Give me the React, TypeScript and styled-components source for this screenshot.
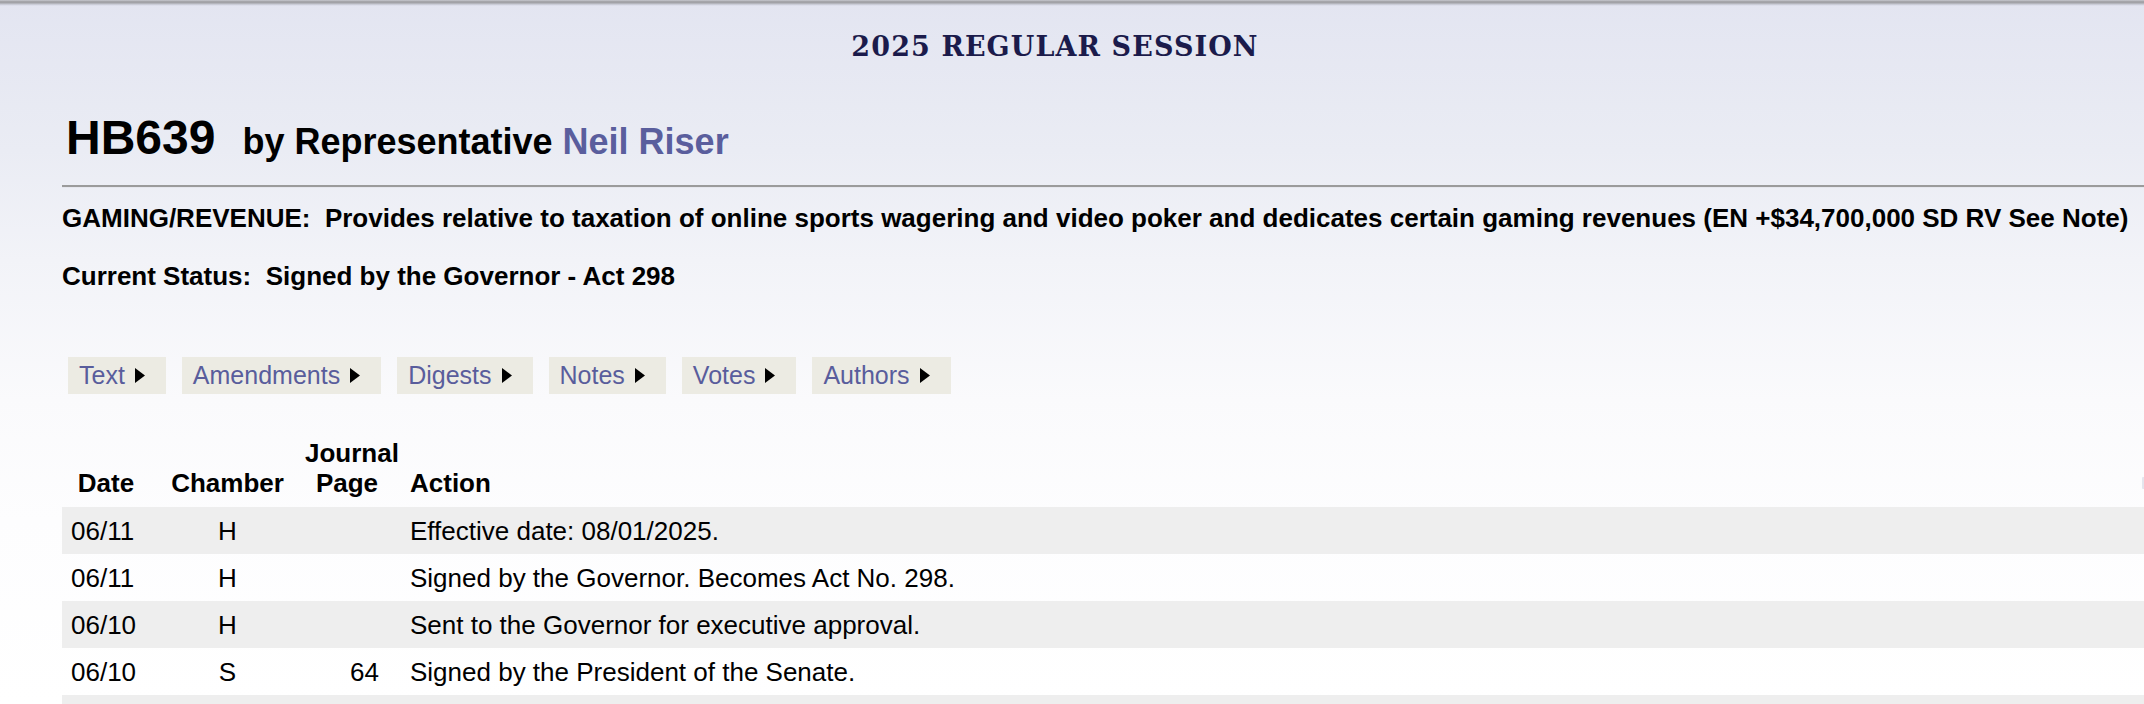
import React from 'react';
import styled, { createGlobalStyle } from 'styled-components';

const Global = createGlobalStyle`
  html, body { margin: 0; padding: 0; overflow: hidden; }
  body {
    width: 2144px;
    min-height: 704px;
    background: linear-gradient(to bottom, #e3e5f1 0px, #eaecf4 150px, #f2f3f8 260px, #fafafc 400px, #fdfdfe 520px, #ffffff 704px);
    font-family: "Liberation Sans", Arial, Helvetica, sans-serif;
    color: #000;
  }
`;

const Page = styled.div`
  position: relative;
  width: 2144px;
  height: 704px;
  overflow: hidden;
`;

const TopShadow = styled.div`
  height: 6px;
  background: linear-gradient(to bottom, #c8c9d0 0px, #9a9a9e 2px, #a9aab0 3px, rgba(205, 207, 220, 0.6) 5px, rgba(227, 229, 241, 0) 6px);
`;

const SessionTitle = styled.div`
  width: 2110px;
  margin-top: 26px;
  text-align: center;
  font-family: "DejaVu Serif", "Liberation Serif", Georgia, serif;
  font-weight: bold;
  font-size: 27px;
  line-height: 30px;
  letter-spacing: 1.1px;
  color: #1b1b4b;
`;

const Content = styled.div`
  padding-left: 62px;
`;

const Heading = styled.div`
  margin-top: 48px;
  padding-left: 4px;
  display: flex;
  align-items: baseline;
  line-height: 56px;
  font-weight: bold;
`;

const BillNo = styled.span`
  font-size: 48px;
`;

const Byline = styled.span`
  margin-left: 27px;
  font-size: 36px;
`;

const AuthorLink = styled.span`
  color: #5a5e9d;
`;

const Rule = styled.div`
  margin-top: 15px;
  width: 2200px;
  height: 2px;
  background: #9b9b9b;
  border-bottom: 1px solid #e6e7ee;
`;

const InfoLine = styled.div<{ $gap: number }>`
  margin-top: ${(p) => p.$gap}px;
  font-size: 26px;
  line-height: 30px;
  font-weight: bold;
  white-space: pre;
`;

const Tabs = styled.div`
  margin-top: 66px;
  margin-left: 6px;
  display: flex;
  gap: 16px;
`;

const Tab = styled.div`
  height: 37px;
  display: inline-flex;
  align-items: center;
  padding: 0 20px 0 11px;
  background: #ecebe3;
  color: #595d9c;
  font-size: 25px;
`;

const Arrow = styled.svg`
  margin-left: 9px;
  width: 12px;
  height: 15px;
  flex: none;
`;

const Table = styled.table`
  margin-top: 44px;
  width: 2090px;
  border-collapse: collapse;
  table-layout: fixed;
  font-size: 26px;
`;

const HeadCell = styled.th<{ $align?: 'left' | 'center' | 'right' }>`
  text-align: ${(p) => p.$align ?? 'center'};
  vertical-align: bottom;
  font-weight: bold;
  line-height: 30px;
  padding: 0 0 9px 0;
`;

const ActionHead = styled.div`
  display: flex;
  justify-content: space-between;
  align-items: center;
  padding-left: 21px;
`;

const EdgeMark = styled.svg`
  width: 16px;
  height: 16px;
  margin-right: -4px;
  flex: none;
`;

const Row = styled.tr<{ $shade: boolean }>`
  background: ${(p) => (p.$shade ? '#eeeeee' : 'transparent')};
`;

const Cell = styled.td<{ $align?: 'left' | 'center' | 'right'; $pl?: number; $pr?: number }>`
  height: 47px;
  padding: 0 ${(p) => p.$pr ?? 0}px 0 ${(p) => p.$pl ?? 0}px;
  text-align: ${(p) => p.$align ?? 'left'};
  vertical-align: middle;
  line-height: 30px;
  white-space: nowrap;
`;

const tabs = ['Text', 'Amendments', 'Digests', 'Notes', 'Votes', 'Authors'];

const rows = [
  { date: '06/11', ch: 'H', page: '', action: 'Effective date: 08/01/2025.' },
  { date: '06/11', ch: 'H', page: '', action: 'Signed by the Governor. Becomes Act No. 298.' },
  { date: '06/10', ch: 'H', page: '', action: 'Sent to the Governor for executive approval.' },
  { date: '06/10', ch: 'S', page: '64', action: 'Signed by the President of the Senate.' },
  { date: '', ch: '', page: '', action: '' },
];

export default function App() {
  return (
    <Page>
      <Global />
      <TopShadow />
      <SessionTitle>2025 REGULAR SESSION</SessionTitle>
      <Content>
        <Heading>
          <BillNo>HB639</BillNo>
          <Byline>
            by Representative <AuthorLink>Neil Riser</AuthorLink>
          </Byline>
        </Heading>
        <Rule />
        <InfoLine $gap={15}>
          {'GAMING/REVENUE:  Provides relative to taxation of online sports wagering and video poker and dedicates certain gaming revenues (EN +$34,700,000 SD RV See Note)'}
        </InfoLine>
        <InfoLine $gap={28}>{'Current Status:  Signed by the Governor - Act 298'}</InfoLine>
        <Tabs>
          {tabs.map((t) => (
            <Tab key={t}>
              {t}
              <Arrow viewBox="0 0 12 15">
                <polygon points="1,0 11,7.5 1,15" fill="#000" />
              </Arrow>
            </Tab>
          ))}
        </Tabs>
        <Table>
          <colgroup>
            <col style={{ width: 88 }} />
            <col style={{ width: 155 }} />
            <col style={{ width: 84 }} />
            <col />
          </colgroup>
          <thead>
            <tr>
              <HeadCell>Date</HeadCell>
              <HeadCell>Chamber</HeadCell>
              <HeadCell>
                Journal
                <br />
                Page
              </HeadCell>
              <HeadCell $align="left">
                <ActionHead>
                  <span>Action</span>
                  <EdgeMark viewBox="0 0 16 16">
                    <rect x="2" y="2" width="4" height="12" rx="1" fill="#e4e6ee" />
                    <rect x="10" y="1" width="5" height="14" rx="1.5" fill="#4a6cc8" />
                  </EdgeMark>
                </ActionHead>
              </HeadCell>
            </tr>
          </thead>
          <tbody>
            {rows.map((r, i) => (
              <Row key={i} $shade={i % 2 === 0}>
                <Cell $pl={9}>{r.date}</Cell>
                <Cell $align="center">{r.ch}</Cell>
                <Cell $align="right" $pr={10}>{r.page}</Cell>
                <Cell $pl={21}>{r.action}</Cell>
              </Row>
            ))}
          </tbody>
        </Table>
      </Content>
    </Page>
  );
}
